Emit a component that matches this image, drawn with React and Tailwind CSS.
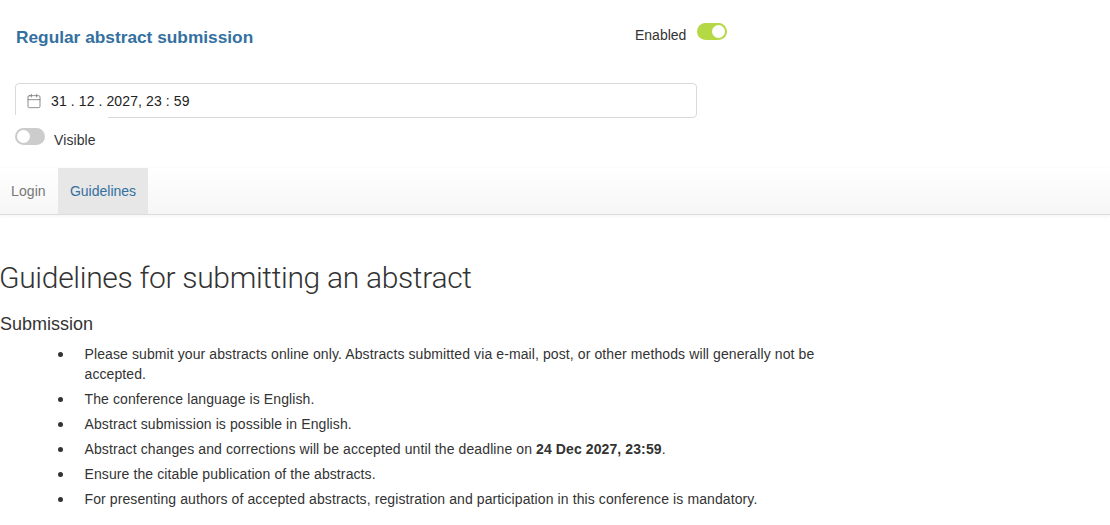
import { Calendar } from 'lucide-react';

const items = [
  'Please submit your abstracts online only. Abstracts submitted via e-mail, post, or other methods will generally not be accepted.',
  'The conference language is English.',
  'Abstract submission is possible in English.',
  <>
    Abstract changes and corrections will be accepted until the deadline on <b className="font-bold">24 Dec 2027, 23:59</b>.
  </>,
  'Ensure the citable publication of the abstracts.',
  'For presenting authors of accepted abstracts, registration and participation in this conference is mandatory.',
];

function Toggle({ on }) {
  return (
    <div className={`flex h-[17px] w-[30px] items-center rounded-full px-[2px] ${on ? 'justify-end bg-[#b5d944]' : 'justify-start bg-[#cccccc]'}`}>
      <div className="size-[13px] rounded-full bg-white" />
    </div>
  );
}

export default function App() {
  return (
    <div className="h-[525px] w-[1110px] overflow-hidden bg-white font-['Liberation_Sans',Arial,sans-serif] text-[14px] tracking-[0.1px] text-[#333333]">
      <div className="flex h-[83px] pl-[16px]">
        <h2 className="mt-[26px] w-[619px] text-[17.3px] leading-[22px] font-bold tracking-normal text-[#33709f]">Regular abstract submission</h2>
        <span className="mt-[26px] w-[62px] leading-[18px] tracking-normal">Enabled</span>
        <div className="mt-[23px]">
          <Toggle on />
        </div>
      </div>

      <div className="relative mx-[15px] flex h-[35px] w-[682px] items-center gap-[9px] rounded-[4px] border border-[#d9d9d9] pl-[10px]">
        <Calendar size={16} strokeWidth={1.25} className="text-[#777777]" />
        <span className="mt-[1px] tracking-[0.1px] text-[#222222]">31 . 12 . 2027, 23 : 59</span>
        <div className="absolute -bottom-px -left-px h-[3px] w-[93px] bg-white" />
      </div>

      <div className="mt-[10px] flex h-[40px] pl-[15px]">
        <Toggle />
        <span className="mt-[3px] ml-[9px] leading-[18px]">Visible</span>
      </div>

      <div className="flex h-[47px] border-b border-[#dddddd] bg-gradient-to-b from-white to-[#f6f6f6] pl-[11px] shadow-[0_1px_4px_rgba(0,0,0,0.05)]">
        <a className="flex w-[47px] items-center text-[#777777]">Login</a>
        <a className="flex w-[90px] items-center justify-center bg-[#e7e7e7] tracking-normal text-[#33709f]">Guidelines</a>
      </div>

      <h1 className="mt-[46px] -ml-px font-['Roboto',sans-serif] text-[30px] leading-[33px] font-light tracking-[-0.32px]">Guidelines for submitting an abstract</h1>
      <h3 className="mt-[20px] text-[18px] leading-[20px] font-normal tracking-normal">Submission</h3>
      <ul className="mt-[10px] w-[840px] pl-[58px] leading-[20px]">
        {items.map((item, i) => (
          <li key={i} className="mb-[5px] flex">
            <span className="mt-[8px] mr-[21.5px] size-[5px] shrink-0 rounded-full bg-[#333333]" />
            <span>{item}</span>
          </li>
        ))}
      </ul>
    </div>
  );
}
